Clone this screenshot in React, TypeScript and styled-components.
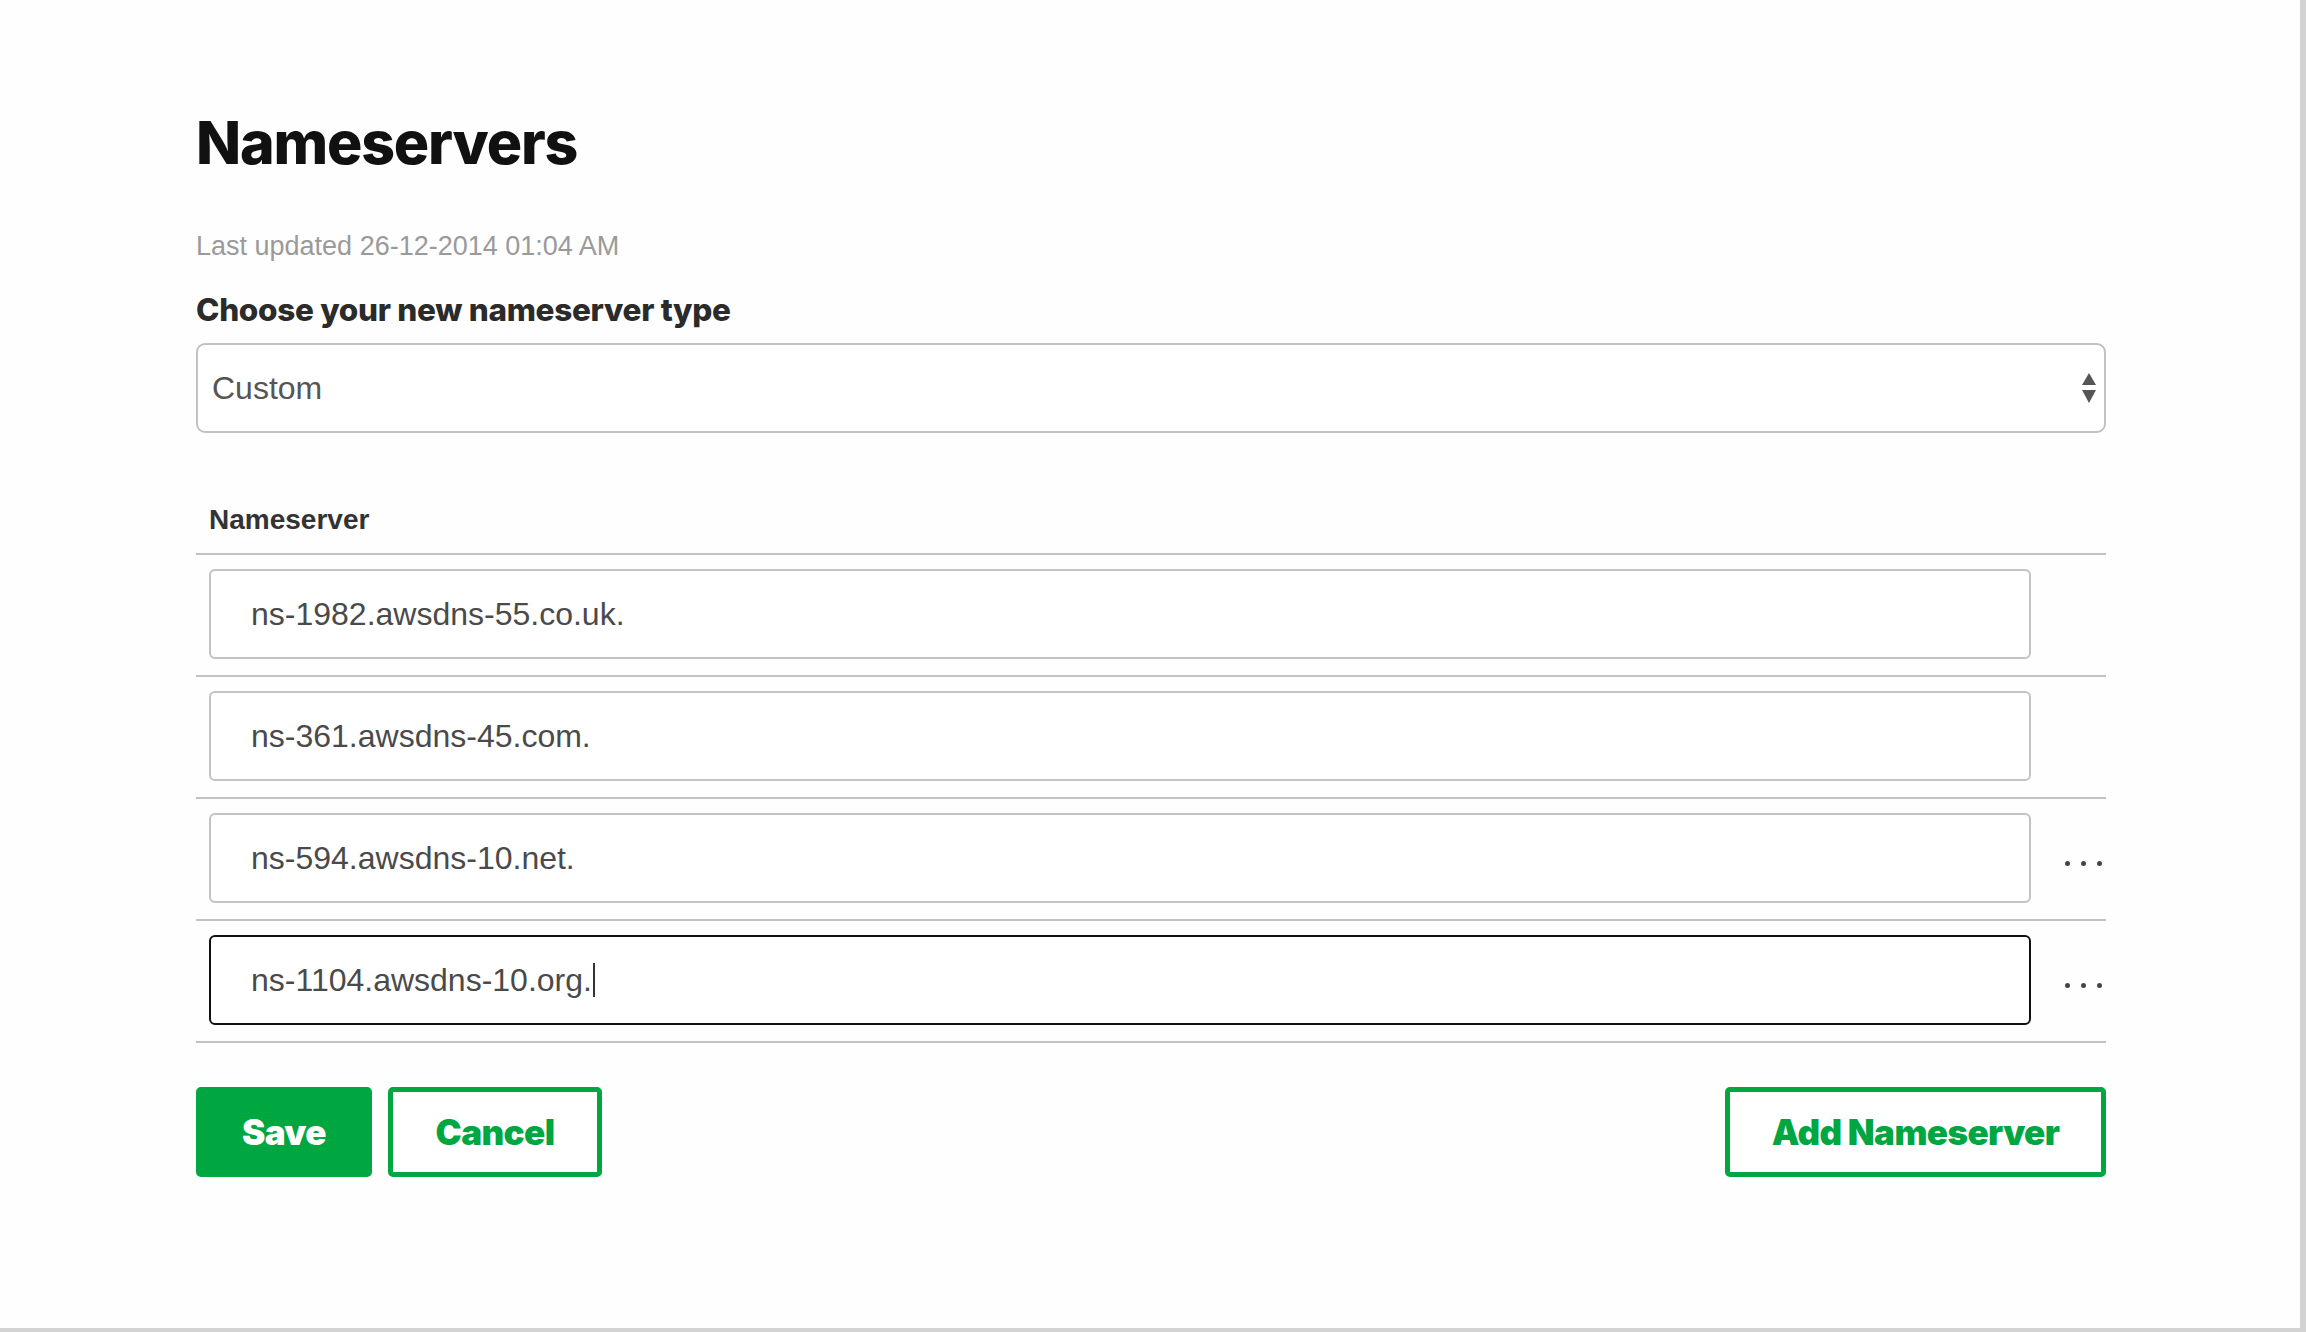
import styled, { createGlobalStyle } from 'styled-components';

const GlobalStyle = createGlobalStyle`
  html, body {
    margin: 0;
    padding: 0;
    background: #ffffff;
  }
  * {
    box-sizing: border-box;
  }
`;

const green = '#00a63f';
const display = '"Inter", "Lato", "Liberation Sans", sans-serif';
const text = '"Liberation Sans", Arial, sans-serif';

const nameservers = [
  { value: 'ns-1982.awsdns-55.co.uk.', more: false, focused: false },
  { value: 'ns-361.awsdns-45.com.', more: false, focused: false },
  { value: 'ns-594.awsdns-10.net.', more: true, focused: false },
  { value: 'ns-1104.awsdns-10.org.', more: true, focused: true },
];

export default function App() {
  return (
    <>
      <GlobalStyle />
      <Frame>
        <Panel>
          <Title>Nameservers</Title>
          <Updated>Last updated 26-12-2014 01:04 AM</Updated>
          <FieldLabel>Choose your new nameserver type</FieldLabel>
          <Select>
            <span>Custom</span>
            <SelectArrows viewBox="0 0 14 30" aria-hidden>
              <polygon points="7,0 14,12 0,12" />
              <polygon points="0,17 14,17 7,30" />
            </SelectArrows>
          </Select>

          <Table>
            <HeaderCell>Nameserver</HeaderCell>
            {nameservers.map((ns) => (
              <Row key={ns.value}>
                <Field $focused={ns.focused}>
                  {ns.value}
                  {ns.focused && <Caret />}
                </Field>
                <MoreCell>
                  {ns.more && (
                    <Dots>
                      <i />
                      <i />
                      <i />
                    </Dots>
                  )}
                </MoreCell>
              </Row>
            ))}
          </Table>

          <Actions>
            <ButtonGroup>
              <Button $primary>Save</Button>
              <Button>Cancel</Button>
            </ButtonGroup>
            <Button $wide>Add Nameserver</Button>
          </Actions>
        </Panel>
      </Frame>
    </>
  );
}

const Frame = styled.div`
  min-height: 100vh;
  border-right: 6px solid #d3d3d3;
  border-bottom: 4px solid #d3d3d3;
  background: #fefefe;
  padding: 113px 0 0 196px;
`;

const Panel = styled.div`
  width: 1910px;
  display: flex;
  flex-direction: column;
`;

const Title = styled.h1`
  margin: 0;
  font-family: ${display};
  font-weight: 800;
  font-size: 59px;
  line-height: 60px;
  color: #111;
  letter-spacing: -1.2px;
`;

const Updated = styled.p`
  margin: 60px 0 0 0;
  font-family: ${text};
  font-size: 27px;
  line-height: 1;
  color: #9a9a9a;
`;

const FieldLabel = styled.div`
  margin-top: 34px;
  font-family: ${display};
  font-weight: 800;
  font-size: 31.5px;
  line-height: 31px;
  letter-spacing: -0.3px;
  color: #2b2b2b;
`;

const Select = styled.div`
  margin-top: 18px;
  height: 90px;
  border: 2px solid #c2c2c2;
  border-radius: 9px;
  display: flex;
  align-items: center;
  justify-content: space-between;
  padding: 0 8px 0 14px;
  font-family: ${text};
  font-size: 32px;
  color: #555;
  background: #fff;
`;

const SelectArrows = styled.svg`
  width: 14px;
  height: 30px;
  fill: #555;
`;

const Table = styled.div`
  margin-top: 73px;
  display: flex;
  flex-direction: column;
`;

const HeaderCell = styled.div`
  padding: 0 13px 20px;
  border-bottom: 2px solid #c2c2c2;
  font-family: ${text};
  font-weight: 700;
  font-size: 28px;
  line-height: 27px;
  color: #333;
`;

const Row = styled.div`
  display: flex;
  align-items: stretch;
  padding: 14px 0 16px 13px;
  border-bottom: 2px solid #c2c2c2;
`;

const Field = styled.div<{ $focused?: boolean }>`
  flex: 1;
  height: 90px;
  display: flex;
  align-items: center;
  padding-left: 40px;
  border: 2px solid ${({ $focused }) => ($focused ? '#111' : '#c2c2c2')};
  border-radius: 6px;
  background: #fff;
  font-family: ${text};
  font-size: 32px;
  color: #4a4a4a;
`;

const Caret = styled.span`
  display: inline-block;
  width: 2px;
  height: 34px;
  margin-left: 1px;
  background: #333;
`;

const MoreCell = styled.div`
  width: 75px;
  display: flex;
  align-items: center;
  justify-content: flex-end;
  padding: 10px 4px 0 0;
`;

const Dots = styled.span`
  display: flex;
  gap: 11px;

  i {
    width: 5px;
    height: 5px;
    border-radius: 50%;
    background: #444;
  }
`;

const Actions = styled.div`
  margin-top: 44px;
  display: flex;
  justify-content: space-between;
  align-items: center;
`;

const ButtonGroup = styled.div`
  display: flex;
  gap: 16px;
`;

const Button = styled.button<{ $primary?: boolean; $wide?: boolean }>`
  height: 90px;
  width: ${({ $primary, $wide }) => ($primary ? '176px' : $wide ? '381px' : '214px')};
  border: 5px solid ${green};
  border-radius: 5px;
  background: ${({ $primary }) => ($primary ? green : '#fff')};
  color: ${({ $primary }) => ($primary ? '#fff' : green)};
  font-family: ${display};
  font-weight: 900;
  font-size: 35px;
  letter-spacing: -0.6px;
  cursor: pointer;
  padding: 0;
`;
